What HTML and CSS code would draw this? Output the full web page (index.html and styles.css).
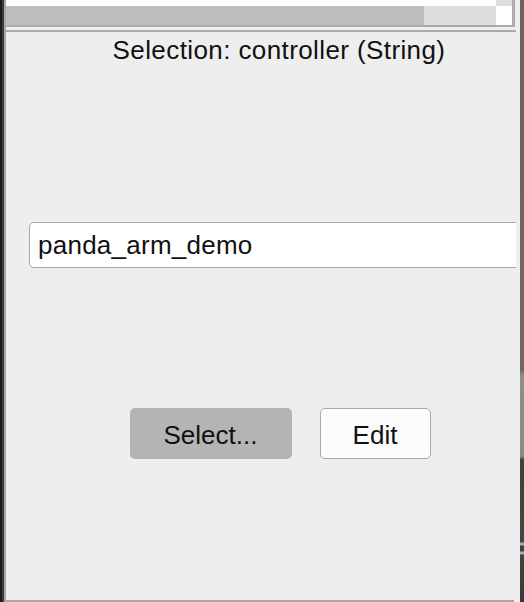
FILE: index.html
```html
<!DOCTYPE html>
<html lang="en">
<head>
<meta charset="utf-8">
<title>Selection</title>
<link rel="stylesheet" href="styles.css">
</head>
<body>
<div class="frame">
  <div class="edge-left"></div>
  <div class="main">
    <div class="scrollpane">
      <div class="sp-view">
        <div class="sp-white"></div>
        <div class="sp-vtrack"></div>
      </div>
      <div class="sp-hbar">
        <div class="sp-thumb"></div>
        <div class="sp-htrack"></div>
        <div class="sp-corner"></div>
      </div>
    </div>
    <div class="separator"></div>
    <div class="content">
      <div class="inner">
        <div class="title">Selection: controller (String)</div>
        <div class="field">panda_arm_demo</div>
        <div class="buttons">
          <div class="btn btn-select">Select...</div>
          <div class="btn btn-edit">Edit</div>
        </div>
      </div>
    </div>
    <div class="bottom-line"></div>
  </div>
  <div class="edge-right"></div>
</div>
</body>
</html>
```
FILE: styles.css
```css
html, body {
  margin: 0;
  padding: 0;
  width: 524px;
  height: 602px;
  overflow: hidden;
  background: #eeeeee;
  font-family: "Liberation Sans", Arial, Helvetica, sans-serif;
  color: #111111;
}

.frame {
  display: flex;
  height: 602px;
}

.edge-left {
  width: 4px;
  flex: none;
  background: linear-gradient(to right, #1b1b1b 0, #1b1b1b 2px, #3c3c3c 2px, #3c3c3c 4px);
}

.edge-right {
  width: 4px;
  flex: none;
  background: linear-gradient(to bottom,
    #6e6258 0, #736659 370px,
    #8e8e8e 376px, #8a8a8a 456px,
    #3f3f3f 460px, #454545 542px,
    #9bb3b3 543px, #9bb3b3 545px,
    #404040 546px, #404040 551px,
    #9bb3b3 552px, #9bb3b3 554px,
    #424242 555px, #3a3a3a 602px);
}

.main {
  flex: 1;
  display: flex;
  flex-direction: column;
  border-left: 2px solid #a7a7a7;
  background: #eeeeee;
  min-width: 0;
}

.scrollpane {
  height: 25px;
  margin-right: 5px;
  border-right: 3px solid #ababab;
  border-bottom: 2px solid #ababab;
  display: flex;
  flex-direction: column;
  flex: none;
}

.sp-view {
  height: 6px;
  display: flex;
}

.sp-white {
  flex: 1;
  background: #ffffff;
}

.sp-vtrack {
  width: 16px;
  background: #dcdcdc;
}

.sp-hbar {
  flex: 1;
  display: flex;
}

.sp-thumb {
  width: 418px;
  background: #bebebe;
}

.sp-htrack {
  flex: 1;
  background: #dcdcdc;
}

.sp-corner {
  width: 16px;
  background: #ffffff;
}

.separator {
  flex: none;
  height: 2px;
  margin-top: 3px;
  margin-right: 4px;
  background: #a9a9a9;
}

.content {
  flex: 1;
  width: 510px;
  overflow: hidden;
}

.inner {
  width: 546px;
  display: flex;
  flex-direction: column;
}

.title {
  margin-top: 3px;
  font-size: 26px;
  line-height: 30px;
  letter-spacing: 0.4px;
  text-align: center;
}

.field {
  margin: 157px 23px 0 23px;
  height: 44px;
  border: 1.5px solid #a9a9a9;
  border-radius: 5px;
  background: #ffffff;
  padding-left: 8px;
  font-size: 26px;
  line-height: 45px;
  letter-spacing: 0.25px;
  color: #111111;
}

.buttons {
  margin-top: 140px;
  display: flex;
  justify-content: center;
  gap: 28px;
  padding-left: 2px;
}

.btn {
  height: 51px;
  box-sizing: border-box;
  border-radius: 5px;
  font-size: 26px;
  line-height: 30px;
  padding-top: 3px;
  display: flex;
  align-items: center;
  justify-content: center;
}

.btn-select {
  width: 162px;
  background: #b4b4b4;
}

.btn-edit {
  width: 111px;
  background: #fbfbfb;
  border: 1.5px solid #a9a9a9;
}

.bottom-line {
  flex: none;
  height: 2px;
  margin-right: 6px;
  background: #a7a7a7;
}
```
